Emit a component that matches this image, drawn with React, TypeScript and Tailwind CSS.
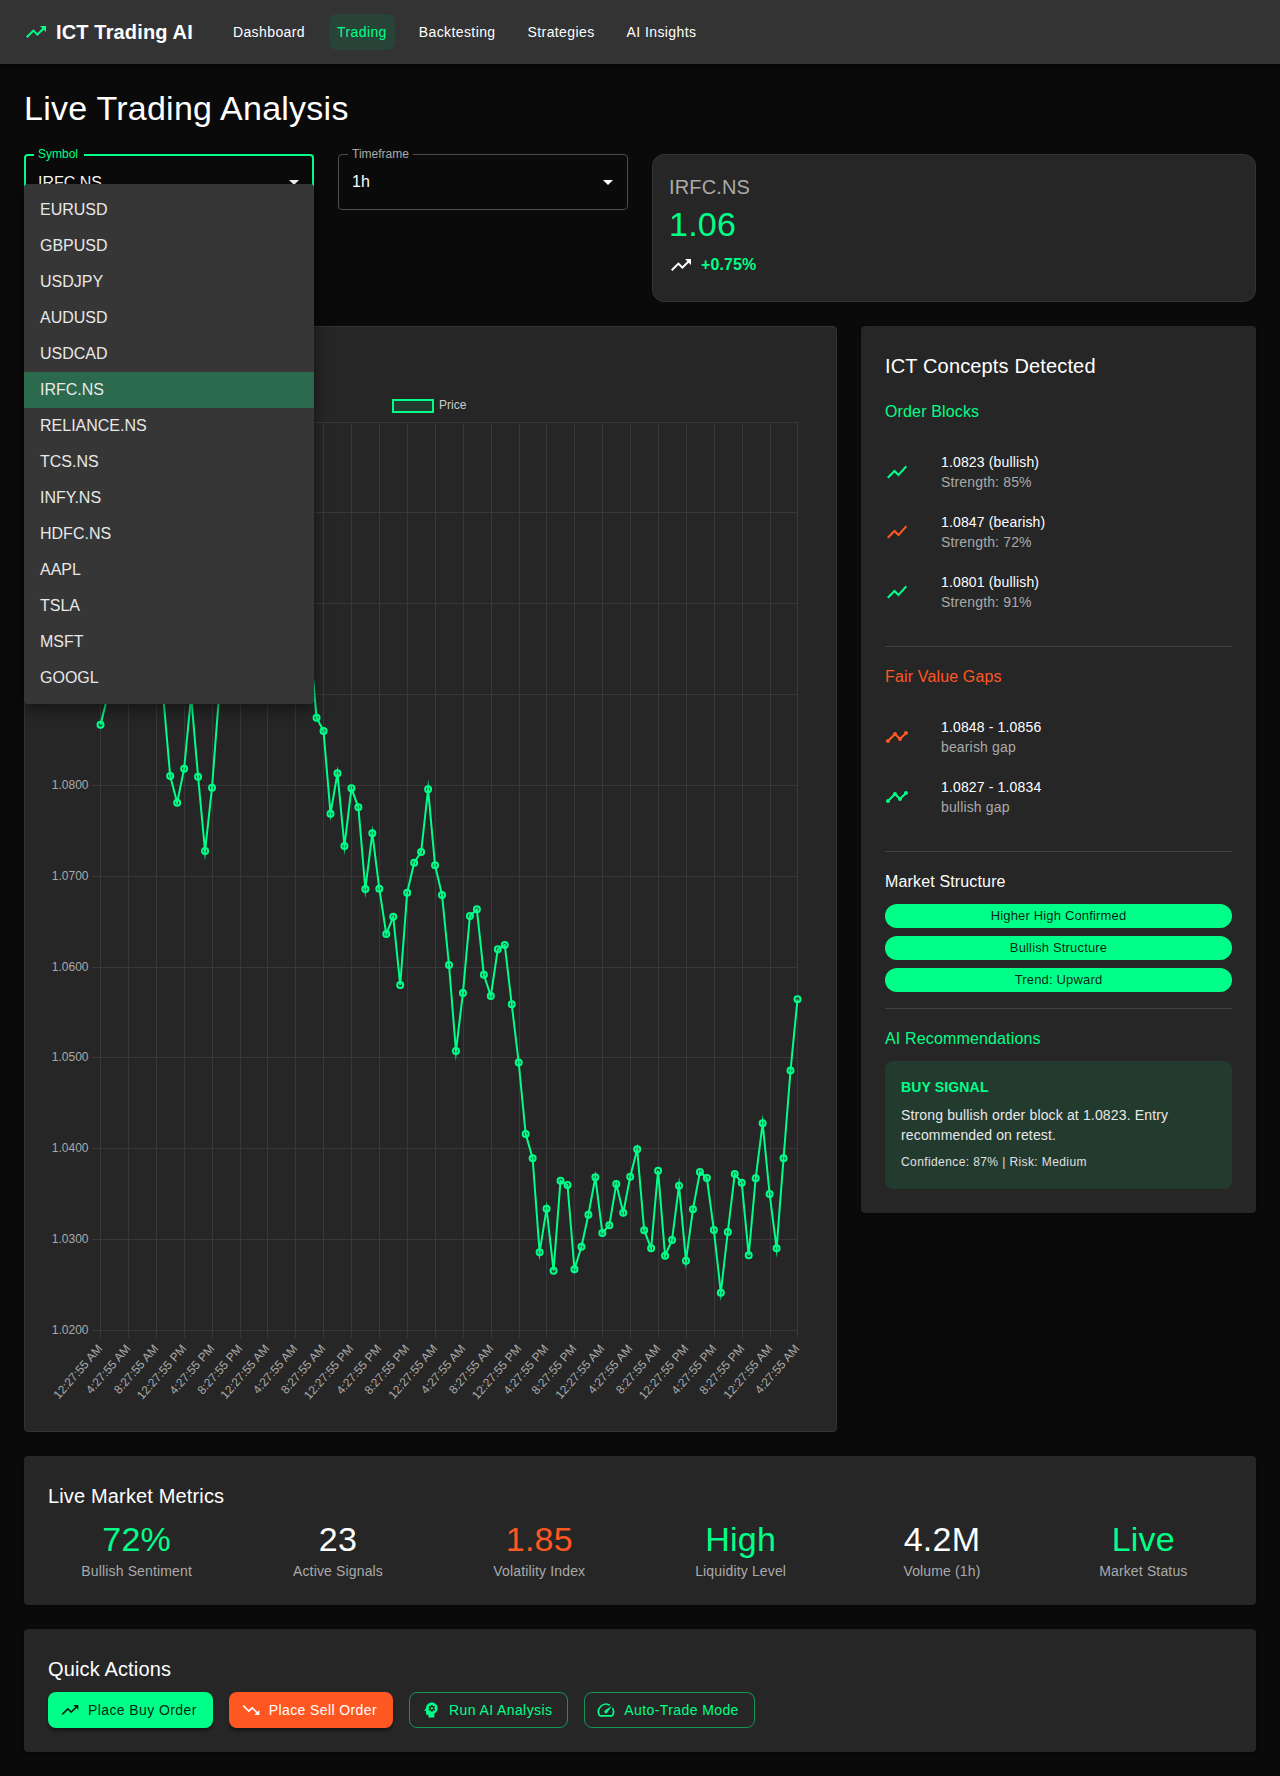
import React from 'react';

const ICONS: Record<string, string[]> = {
  up: ['m16 6 2.29 2.29-4.88 4.88-4-4L2 16.59 3.41 18l6-6 4 4 6.3-6.29L22 12V6z'],
  down: ['m16 18 2.29-2.29-4.88-4.88-4 4L2 7.41 3.41 6l6 6 4-4 6.3 6.29L22 12v6z'],
  chart: ['M3.5 18.49l6-6.01 4 4L22 6.92l-1.41-1.41-7.09 7.97-4-4L2 16.99z'],
  timeline: [
    'M23 8c0 1.1-.9 2-2 2-.18 0-.35-.02-.51-.07l-3.56 3.55c.05.16.07.34.07.52 0 1.1-.9 2-2 2s-2-.9-2-2c0-.18.02-.36.07-.52l-2.55-2.55c-.16.05-.34.07-.52.07s-.36-.02-.52-.07l-4.55 4.56c.05.16.07.33.07.51 0 1.1-.9 2-2 2s-2-.9-2-2 .9-2 2-2c.18 0 .35.02.51.07l4.56-4.55C8.02 9.36 8 9.18 8 9c0-1.1.9-2 2-2s2 .9 2 2c0 .18-.02.36-.07.52l2.55 2.55c.16-.05.34-.07.52-.07s.36.02.52.07l3.55-3.56C19.02 8.35 19 8.18 19 8c0-1.1.9-2 2-2s2 .9 2 2z',
  ],
  brain: [
    'M13 8.57c-.79 0-1.43.64-1.43 1.43s.64 1.43 1.43 1.43 1.43-.64 1.43-1.43-.64-1.43-1.43-1.43z',
    'M13 3C9.25 3 6.2 5.94 6.02 9.64L4.1 12.2c-.25.33-.01.8.4.8H6v3c0 1.1.9 2 2 2h1v3h7v-4.68c2.36-1.12 4-3.53 4-6.32 0-3.87-3.13-7-7-7zm3 7c0 .13-.01.26-.02.39l.83.66c.08.06.1.16.05.25l-.8 1.39c-.05.09-.16.12-.24.09l-.99-.4c-.21.16-.43.29-.67.39L14 13.83c-.01.1-.1.17-.2.17h-1.6c-.1 0-.18-.07-.2-.17l-.15-1.06c-.25-.1-.47-.23-.68-.39l-.99.4c-.09.03-.2 0-.25-.09l-.8-1.39c-.05-.08-.03-.19.05-.25l.84-.66c-.01-.13-.02-.26-.02-.39s.02-.27.04-.39l-.85-.66c-.08-.06-.1-.16-.05-.26l.8-1.38c.05-.09.15-.12.24-.09l1 .4c.2-.15.43-.29.67-.39L12 6.17c.02-.1.1-.17.2-.17h1.6c.1 0 .18.07.2.17l.15 1.06c.24.1.46.23.67.39l1-.4c.09-.03.2 0 .24.09l.8 1.38c.05.09.03.2-.05.26l-.85.66c.03.12.04.25.04.39z',
  ],
  speed: [
    'm20.38 8.57-1.23 1.85a8 8 0 0 1-.22 7.58H5.07A8 8 0 0 1 15.58 6.85l1.85-1.23A10 10 0 0 0 3.35 19a2 2 0 0 0 1.72 1h13.85a2 2 0 0 0 1.74-1 10 10 0 0 0-.27-10.44z',
    'M10.59 15.41a2 2 0 0 0 2.83 0l5.66-8.49-8.49 5.66a2 2 0 0 0 0 2.83z',
  ],
};

const Icon = ({ name, className }: { name: string; className: string }) => (
  <svg viewBox="0 0 24 24" fill="currentColor" className={className}>
    {ICONS[name].map((d) => (
      <path key={d} d={d} />
    ))}
  </svg>
);

const Arrow = ({ className }: { className: string }) => (
  <span className={`absolute h-0 w-0 border-x-[5px] border-t-[5px] border-x-transparent border-t-white ${className}`} />
);

const symbols = ['EURUSD', 'GBPUSD', 'USDJPY', 'AUDUSD', 'USDCAD', 'IRFC.NS', 'RELIANCE.NS', 'TCS.NS', 'INFY.NS', 'HDFC.NS', 'AAPL', 'TSLA', 'MSFT', 'GOOGL'];

const gridX = [100, 128, 156, 184, 212, 240, 267, 295, 323, 351, 379, 407, 435, 463, 491, 519, 546, 574, 602, 630, 658, 686, 714, 742, 770, 797];
const gridY = [422, 512, 603, 694, 785, 876, 967, 1057, 1148, 1239, 1330];
const hours = ['12', '4', '8', '12', '4', '8'];

// pixel y of each price point, read off the reference (the ones under the menu are filler)
const points = [
  724.7, 697, 660, 620, 590, 610, 640, 600, 650, 696, 776, 802.7, 768.7, 696, 776.7, 851, 787.7, 696, 640, 600,
  560, 590, 540, 580, 520, 560, 600, 570, 610, 590, 640, 717.7, 731, 813.7, 773.3, 846, 788.3, 807.3, 889, 833.3,
  888.7, 934, 916.7, 985, 892.7, 862.7, 852, 789.3, 865.3, 895, 965, 1051, 993, 916, 909.3, 974.7, 996, 949.3, 945, 1004.3,
  1062.5, 1134, 1158.3, 1252.3, 1208.7, 1270.7, 1180.7, 1185, 1269.3, 1246.7, 1214.7, 1177.3, 1233, 1225.3, 1184, 1212.7, 1176.7, 1149.3, 1230.3, 1248.3,
  1170.7, 1255.7, 1240, 1185.7, 1260.7, 1209.3, 1172, 1178, 1230, 1292.7, 1232, 1174, 1182.7, 1255.3, 1178.3, 1123.3, 1194, 1248.3, 1158.3, 1070.5,
  999.3,
];
const px = (i: number) => 100.5 + i * 6.97;

const PriceChart = () => (
  <svg width="811" height="1104" viewBox="25 327 811 1104" className="block">
    {gridX.map((x) => (
      <line key={x} x1={x + 0.5} x2={x + 0.5} y1={422} y2={1338} stroke="#383838" />
    ))}
    {gridY.map((y) => (
      <line key={y} x1={92} x2={798} y1={y + 0.5} y2={y + 0.5} stroke="#383838" />
    ))}
    {gridY.map((y, i) => (
      <text key={y} x={88.5} y={y + 4} textAnchor="end" fontSize="12" fill="#aaaaaa">
        {(1.12 - i * 0.01).toFixed(4)}
      </text>
    ))}
    {gridX.map((x, i) => (
      <text key={x} x={x + 3} y={1349} textAnchor="end" fontSize="12" fill="#aaaaaa" transform={`rotate(-49 ${x + 3} 1349)`}>
        {`${hours[i % 6]}:27:55 ${i % 6 < 3 ? 'AM' : 'PM'}`}
      </text>
    ))}
    <rect x={393} y={400} width={40} height={12} fill="#00ff881a" stroke="#00ff88" strokeWidth="2" />
    <text x={439} y={408.5} fontSize="12" fill="#cccccc">Price</text>
    <polyline
      points={points.map((y, i) => `${px(i)},${y}`).join(' ')}
      fill="none"
      stroke="#00ff88"
      strokeWidth="2"
      strokeMiterlimit="10"
    />
    {points.map((y, i) => (
      <circle key={i} cx={px(i)} cy={y} r="3" fill="#00ff881a" stroke="#00ff88" strokeWidth="2" />
    ))}
  </svg>
);

const ConceptRow = ({ icon, color, title, sub }: { icon: string; color: string; title: string; sub: string }) => (
  <div className="flex h-[60px] items-center">
    <div className="w-14">
      <Icon name={icon} className={`h-6 w-6 ${color}`} />
    </div>
    <div className="text-sm leading-5 tracking-[0.15px]">
      <div className="text-white">{title}</div>
      <div className="text-[#aaaaaa]">{sub}</div>
    </div>
  </div>
);

const Metric = ({ value, label, color }: { value: string; label: string; color: string }) => (
  <div className="text-center">
    <div className={`mb-[2px] text-[34px] leading-[40px] tracking-[0.25px] ${color}`}>{value}</div>
    <div className="text-sm leading-5 tracking-[0.15px] text-[#aaaaaa]">{label}</div>
  </div>
);

const ActionButton = ({ icon, label, className }: { icon: string; label: string; className: string }) => (
  <button className={`flex h-9 items-center gap-2 rounded-lg text-sm tracking-[0.4px] ${className}`}>
    <Icon name={icon} className="h-5 w-5" />
    {label}
  </button>
);

const navItems = ['Dashboard', 'Trading', 'Backtesting', 'Strategies', 'AI Insights'];

export default function App() {
  return (
    <div className="min-h-[1776px] bg-[#0a0a0a] font-['Liberation_Sans',Arial,sans-serif] text-white">
      <header className="flex h-16 items-center bg-[#333333] px-6 shadow-[0_2px_4px_rgba(0,0,0,0.5)]">
        <Icon name="up" className="mr-2 h-6 w-6 text-[#00ff88]" />
        <span className="mr-8 text-xl font-bold tracking-[0.15px]">ICT Trading AI</span>
        <nav className="flex gap-4">
          {navItems.map((item) => (
            <a
              key={item}
              className={`flex h-9 items-center rounded-lg px-2 text-sm tracking-[0.4px] ${item === 'Trading' ? 'bg-[#284438] text-[#00ff88]' : 'text-white'}`}
            >
              {item}
            </a>
          ))}
        </nav>
      </header>

      <main className="p-6">
        <h1 className="mb-[26px] text-[34px] leading-[40px] tracking-[0.25px]">Live Trading Analysis</h1>

        <div className="mb-6 grid grid-cols-[290px_290px_604px] gap-6">
          <div className="relative h-14 self-start rounded border-2 border-[#00ff88]">
            <span className="absolute left-[8px] top-[-10px] bg-[#0a0a0a] pl-[4px] pr-[6px] text-xs leading-4 text-[#00ff88]">Symbol</span>
            <div className="pl-3 pt-[15px] leading-6">IRFC.NS</div>
            <Arrow className="right-[13px] top-[24px]" />
            <div className="absolute left-[-2px] top-[28px] z-10 w-[290px] rounded bg-[#363636] py-2 shadow-[0_5px_15px_rgba(0,0,0,0.5)]">
              {symbols.map((s) => (
                <div key={s} className={`flex h-9 items-center px-4 text-[#e8e8e8] ${s === 'IRFC.NS' ? 'bg-[#2c6a4e]' : ''}`}>
                  {s}
                </div>
              ))}
            </div>
          </div>

          <div className="relative h-14 self-start rounded border border-[#4d4d4d]">
            <span className="absolute left-[9px] top-[-9px] bg-[#0a0a0a] px-[4px] text-xs leading-4 text-[#aaaaaa]">Timeframe</span>
            <div className="pl-[13px] pt-[15px] leading-6">1h</div>
            <Arrow className="right-[14px] top-[25px]" />
          </div>

          <div className="h-[148px] rounded-xl border border-[#333333] bg-[#262626] px-4 pt-4">
            <div className="text-xl leading-8 tracking-[0.15px] text-[#aaaaaa]">IRFC.NS</div>
            <div className="text-[34px] leading-[42px] tracking-[0.25px] text-[#00ff88]">1.06</div>
            <div className="mt-2 flex items-center gap-2">
              <Icon name="up" className="h-6 w-6 text-white" />
              <span className="font-bold tracking-[0.1px] text-[#00ff88]">+0.75%</span>
            </div>
          </div>
        </div>

        <div className="mb-6 grid grid-cols-[813px_395px] items-start gap-6">
          <section className="h-[1106px] rounded border border-[#333333] bg-[#262626]">
            <PriceChart />
          </section>

          <section className="h-[887px] rounded bg-[#262626] px-6 pt-6 shadow-[0_1px_3px_rgba(0,0,0,0.5)]">
            <h2 className="text-xl leading-8 tracking-[0.15px]">ICT Concepts Detected</h2>
            <h3 className="mt-[18px] leading-6 tracking-[0.15px] text-[#00ff88]">Order Blocks</h3>
            <div className="mt-[18px]">
              <ConceptRow icon="chart" color="text-[#00ff88]" title="1.0823 (bullish)" sub="Strength: 85%" />
              <ConceptRow icon="chart" color="text-[#ff5722]" title="1.0847 (bearish)" sub="Strength: 72%" />
              <ConceptRow icon="chart" color="text-[#00ff88]" title="1.0801 (bullish)" sub="Strength: 91%" />
            </div>
            <hr className="mt-6 border-[#424242]" />
            <h3 className="mt-[18px] leading-6 tracking-[0.15px] text-[#ff5722]">Fair Value Gaps</h3>
            <div className="mt-[18px]">
              <ConceptRow icon="timeline" color="text-[#ff5722]" title="1.0848 - 1.0856" sub="bearish gap" />
              <ConceptRow icon="timeline" color="text-[#00ff88]" title="1.0827 - 1.0834" sub="bullish gap" />
            </div>
            <hr className="mt-6 border-[#424242]" />
            <h3 className="mt-[18px] leading-6 tracking-[0.15px]">Market Structure</h3>
            <div className="mt-[10px] flex flex-col gap-2">
              {['Higher High Confirmed', 'Bullish Structure', 'Trend: Upward'].map((chip) => (
                <div key={chip} className="flex h-6 items-center justify-center rounded-full bg-[#00ff88] text-[13px] tracking-[0.16px] text-[#000000de]">
                  {chip}
                </div>
              ))}
            </div>
            <hr className="mt-4 border-[#424242]" />
            <h3 className="mt-[18px] leading-6 tracking-[0.15px] text-[#00ff88]">AI Recommendations</h3>
            <div className="mt-[10px] h-[128px] rounded-lg bg-[#233a2f] p-4">
              <div className="text-sm font-bold leading-5 tracking-[0.15px] text-[#00ff88]">BUY SIGNAL</div>
              <p className="mt-2 text-sm leading-5 tracking-[0.15px] text-[#e8e8e8]">Strong bullish order block at 1.0823. Entry recommended on retest.</p>
              <p className="mt-[7px] text-xs leading-5 tracking-[0.4px] text-[#e0e0e0]">Confidence: 87% | Risk: Medium</p>
            </div>
          </section>
        </div>

        <section className="mb-6 h-[149px] rounded bg-[#262626] p-6 shadow-[0_1px_3px_rgba(0,0,0,0.5)]">
          <h2 className="mb-[7px] text-xl leading-8 tracking-[0.15px]">Live Market Metrics</h2>
          <div className="grid grid-cols-6 gap-6">
            <Metric value="72%" label="Bullish Sentiment" color="text-[#00ff88]" />
            <Metric value="23" label="Active Signals" color="text-white" />
            <Metric value="1.85" label="Volatility Index" color="text-[#ff5722]" />
            <Metric value="High" label="Liquidity Level" color="text-[#00ff88]" />
            <Metric value="4.2M" label="Volume (1h)" color="text-white" />
            <Metric value="Live" label="Market Status" color="text-[#00ff88]" />
          </div>
        </section>

        <section className="h-[123px] rounded bg-[#262626] p-6 shadow-[0_1px_3px_rgba(0,0,0,0.5)]">
          <h2 className="mb-[7px] text-xl leading-8 tracking-[0.15px]">Quick Actions</h2>
          <div className="flex gap-4">
            <ActionButton icon="up" label="Place Buy Order" className="bg-[#00ff88] pl-3 pr-4 text-[#000000de] shadow-[0_3px_3px_rgba(0,0,0,0.4)]" />
            <ActionButton icon="down" label="Place Sell Order" className="bg-[#ff5722] pl-3 pr-4 text-white shadow-[0_3px_3px_rgba(0,0,0,0.4)]" />
            <ActionButton icon="brain" label="Run AI Analysis" className="border border-[#00ff8880] pl-[11px] pr-[15px] text-[#00ff88]" />
            <ActionButton icon="speed" label="Auto-Trade Mode" className="border border-[#00ff8880] pl-[11px] pr-[15px] text-[#00ff88]" />
          </div>
        </section>
      </main>
    </div>
  );
}
